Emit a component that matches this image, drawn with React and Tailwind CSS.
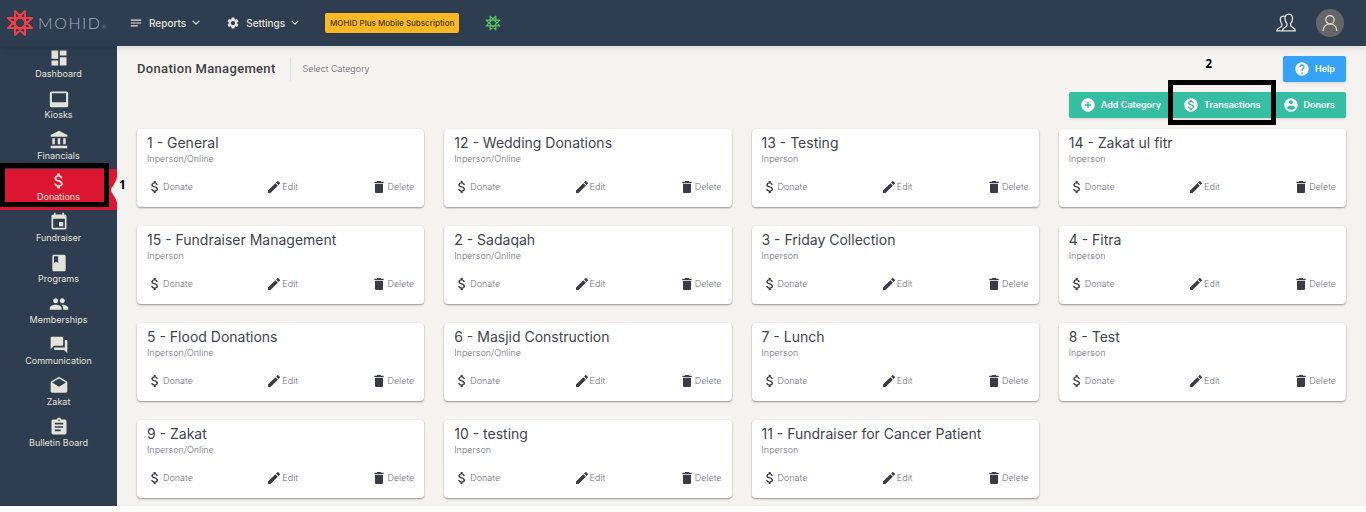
import {
  MdAccountBalance,
  MdAddCircle,
  MdAssignment,
  MdAttachMoney,
  MdBook,
  MdDashboard,
  MdDelete,
  MdDrafts,
  MdEdit,
  MdEvent,
  MdForum,
  MdHelp,
  MdMonetizationOn,
  MdNotes,
  MdPeople,
  MdSettings,
} from "react-icons/md";

const navItems = [
  { label: "Dashboard", icon: MdDashboard },
  { label: "Kiosks", icon: KioskIcon },
  { label: "Financials", icon: MdAccountBalance },
  { label: "Donations", icon: MdAttachMoney, active: true },
  { label: "Fundraiser", icon: MdEvent },
  { label: "Programs", icon: MdBook },
  { label: "Memberships", icon: MdPeople },
  { label: "Communication", icon: MdForum },
  { label: "Zakat", icon: MdDrafts },
  { label: "Bulletin Board", icon: MdAssignment },
];

const categories = [
  { name: "1 - General", type: "Inperson/Online" },
  { name: "12 - Wedding Donations", type: "Inperson/Online" },
  { name: "13 - Testing", type: "Inperson" },
  { name: "14 - Zakat ul fitr", type: "Inperson" },
  { name: "15 - Fundraiser Management", type: "Inperson" },
  { name: "2 - Sadaqah", type: "Inperson/Online" },
  { name: "3 - Friday Collection", type: "Inperson" },
  { name: "4 - Fitra", type: "Inperson" },
  { name: "5 - Flood Donations", type: "Inperson/Online" },
  { name: "6 - Masjid Construction", type: "Inperson/Online" },
  { name: "7 - Lunch", type: "Inperson" },
  { name: "8 - Test", type: "Inperson" },
  { name: "9 - Zakat", type: "Inperson/Online" },
  { name: "10 - testing", type: "Inperson" },
  { name: "11 - Fundraiser for Cancer Patient", type: "Inperson" },
];

// Eight-pointed star made of one continuous line
function Star({ className, strokeWidth }) {
  return (
    <svg viewBox="0 0 28 28" className={className} fill="none" stroke="currentColor" strokeWidth={strokeWidth} aria-hidden="true">
      <path
        strokeLinejoin="round"
        d="M26 9.03 L9.03 26 L9.03 2 L26 18.97 L2 18.97 L18.97 2 L18.97 26 L2 9.03 Z"
      />
    </svg>
  );
}

// Screen with a thick bottom bezel
function KioskIcon({ className }) {
  return (
    <svg viewBox="0 0 24 24" className={className} fill="currentColor" fillRule="evenodd" aria-hidden="true">
      <path d="M3 3 H21 A2 2 0 0 1 23 5 V20 A2 2 0 0 1 21 22 H3 A2 2 0 0 1 1 20 V5 A2 2 0 0 1 3 3 Z M3.5 5.2 V16 H20.5 V5.2 Z" />
    </svg>
  );
}

function DonorIcon({ className }) {
  return (
    <svg viewBox="0 0 24 24" className={className} fill="currentColor" aria-hidden="true">
      <path d="M12 2C6.48 2 2 6.48 2 12s4.48 10 10 10 10-4.48 10-10S17.52 2 12 2zm0 3c1.66 0 3 1.34 3 3s-1.34 3-3 3-3-1.34-3-3 1.34-3 3-3zm0 14.2c-2.5 0-4.71-1.28-6-3.22.03-1.99 4-3.08 6-3.08 1.99 0 5.97 1.09 6 3.08-1.29 1.94-3.5 3.22-6 3.22z" />
    </svg>
  );
}

function Chevron() {
  return (
    <svg viewBox="0 0 8 6" className="h-1.5 w-2" fill="none" stroke="currentColor" strokeWidth="1.2" aria-hidden="true">
      <path d="M1 1.2 L4 4.2 L7 1.2" strokeLinecap="round" strokeLinejoin="round" />
    </svg>
  );
}

function UsersIcon() {
  return (
    <svg viewBox="0 0 20 20" className="h-5 w-5" fill="none" stroke="currentColor" strokeWidth="1.3" strokeLinejoin="round" aria-hidden="true">
      <path d="M12.7 1.2 C10 1.2 8.8 3 9 5.8 C9.1 7.8 9.8 9.4 10.9 10.4 V12.6 C10.6 14.4 6.6 14.4 6.3 17.8 H19.3 C19 14.4 15 14.4 14.7 12.6 V10.4 C15.8 9.4 16.4 7.8 16.5 5.8 C16.6 3 15.4 1.2 12.7 1.2 Z" />
      <path d="M9.2 3.3 C5.8 2.4 4.1 4.4 4.3 7 C4.4 8.8 5 10 5.8 10.9 V12.9 C5.5 14.6 1 14.6 .8 17.8 H6.3" />
    </svg>
  );
}

function UserIcon() {
  return (
    <svg viewBox="0 0 16 16" className="h-4 w-4" fill="none" stroke="currentColor" strokeWidth="1.2" strokeLinecap="round" aria-hidden="true">
      <circle cx="8" cy="4.8" r="4.2" />
      <path d="M1.2 15.4 C1.6 11.6 4.2 9 8 9 C11.8 9 14.4 11.6 14.8 15.4" />
    </svg>
  );
}

function Header() {
  return (
    <header className="relative z-10 flex h-[46px] items-center bg-[#2e3e50] pr-[22px] text-[#e4e3d8] shadow-[0_1px_8px_rgba(0,0,0,0.15)]">
      <a href="#" className="flex w-[117px] items-center gap-1 pl-1.5 text-[#a9b1b9]">
        <Star className="h-7 w-7 text-[#ef4048]" strokeWidth="2" />
        <span className="font-[Lato] text-base font-light tracking-widest">
          MOHID<span className="text-[6px]">®</span>
        </span>
      </a>
      <nav className="flex flex-1 items-center">
        <button type="button" className="ml-3 flex items-center gap-1.5 text-[10px] font-medium">
          <MdNotes className="h-3.5 w-3.5" />
          Reports
          <Chevron />
        </button>
        <button type="button" className="ml-[26px] flex items-center gap-1.5 text-[10px] font-medium">
          <MdSettings className="h-3.5 w-3.5" />
          Settings
          <Chevron />
        </button>
        <button type="button" className="ml-[26px] h-5 w-[134px] whitespace-nowrap rounded-xs bg-[#ffb822] text-center text-[8px] font-medium text-[#3f3a2a] shadow">
          MOHID Plus Mobile Subscription
        </button>
        <a href="#" className="ml-[26px] text-[#58c75c]" aria-label="MOHID">
          <Star className="h-4 w-4" strokeWidth="2" />
        </a>
      </nav>
      <button type="button" className="mr-5" aria-label="Users">
        <UsersIcon />
      </button>
      <button type="button" className="flex h-7 w-7 items-center justify-center rounded-full bg-[#666666]" aria-label="Profile">
        <UserIcon />
      </button>
    </header>
  );
}

function Sidebar() {
  return (
    <aside className="w-[117px] shrink-0 bg-[#2e3e50] text-[#e4e3d8]">
      <ul>
        {navItems.map(({ label, icon: Icon, active }) => (
          <li key={label} className="relative">
            <a
              href="#"
              className={`flex h-[41px] flex-col items-center pt-0.5 text-[9px] leading-3 ${active ? "bg-[#dc1631]" : ""}`}
            >
              <Icon className="h-5 w-5 shrink-0" />
              {label}
            </a>
            {active && (
              <>
                <svg viewBox="0 0 6 26" className="absolute right-0 top-2 h-[26px] w-1.5" aria-hidden="true">
                  <path d="M6 0 L6 26 C5 20 0 16 0 13 C0 10 5 6 6 0 Z" fill="#f4f3ef" />
                </svg>
                <div className="absolute -top-1.5 left-0 h-11 w-[109px] border-5 border-black" />
                <span className="absolute left-[119px] top-2 z-10 font-['Open_Sans'] text-xs font-bold text-black">1</span>
              </>
            )}
          </li>
        ))}
      </ul>
    </aside>
  );
}

function ActionButton({ icon: Icon, children }) {
  return (
    <button type="button" className="flex h-[26px] items-center gap-[5px] px-[11px] text-[9px] font-semibold text-white">
      <Icon className="h-4 w-4" />
      {children}
    </button>
  );
}

function CardButton({ icon: Icon, children }) {
  return (
    <button type="button" className="flex h-4 items-center">
      <Icon className="h-4 w-4 text-[#3b3b48]" />
      {children}
    </button>
  );
}

function CategoryCard({ category }) {
  return (
    <article className="rounded-sm bg-white px-2.5 pb-3 pt-1 shadow-[0_1px_2px_rgba(0,0,0,0.4)]">
      <h2 className="truncate text-sm leading-5 text-[#3f4350]">{category.name}</h2>
      <p className="text-[9px] font-light leading-3 text-[#6f7080]">{category.type}</p>
      <div className="mt-3.5 flex justify-between text-[9px] font-light text-[#6f7080]">
        <CardButton icon={MdAttachMoney}>Donate</CardButton>
        <CardButton icon={MdEdit}>Edit</CardButton>
        <CardButton icon={MdDelete}>Delete</CardButton>
      </div>
    </article>
  );
}

export default function App() {
  return (
    <div className="bg-[#f4f3ef] font-[Inter,sans-serif]">
      <Header />
      <div className="flex">
        <Sidebar />
        <main className="min-w-0 flex-1 px-5 pb-2 pt-2.5">
          <div className="flex items-center justify-between">
            <div className="flex items-center">
              <h1 className="font-[Roboto] text-[13px] font-medium tracking-wide text-[#3f4047]">Donation Management</h1>
              <span className="ml-3.5 h-6 border-l border-[#dfe2ea]" />
              <span className="ml-3 text-[9px] font-light text-[#5f606c]">Select Category</span>
            </div>
            <div className="flex rounded-xs bg-[#36a3f7] shadow">
              <ActionButton icon={MdHelp}>Help</ActionButton>
            </div>
          </div>

          <div className="mt-2.5 flex justify-end">
            <div className="flex rounded-xs bg-[#36bea3] shadow">
              <ActionButton icon={MdAddCircle}>Add Category</ActionButton>
              <div className="relative">
                <ActionButton icon={MdMonetizationOn}>Transactions</ActionButton>
                <div className="absolute -left-1 -right-1 -top-3 h-[45px] border-5 border-black" />
                <span className="absolute -top-9 left-1/3 font-['Open_Sans'] text-xs font-bold text-black">2</span>
              </div>
              <ActionButton icon={DonorIcon}>Donors</ActionButton>
            </div>
          </div>

          <section className="mt-[11px] grid grid-cols-1 gap-x-5 gap-y-[19px] sm:grid-cols-2 lg:grid-cols-4">
            {categories.map((category) => (
              <CategoryCard key={category.name} category={category} />
            ))}
          </section>
        </main>
      </div>
    </div>
  );
}
